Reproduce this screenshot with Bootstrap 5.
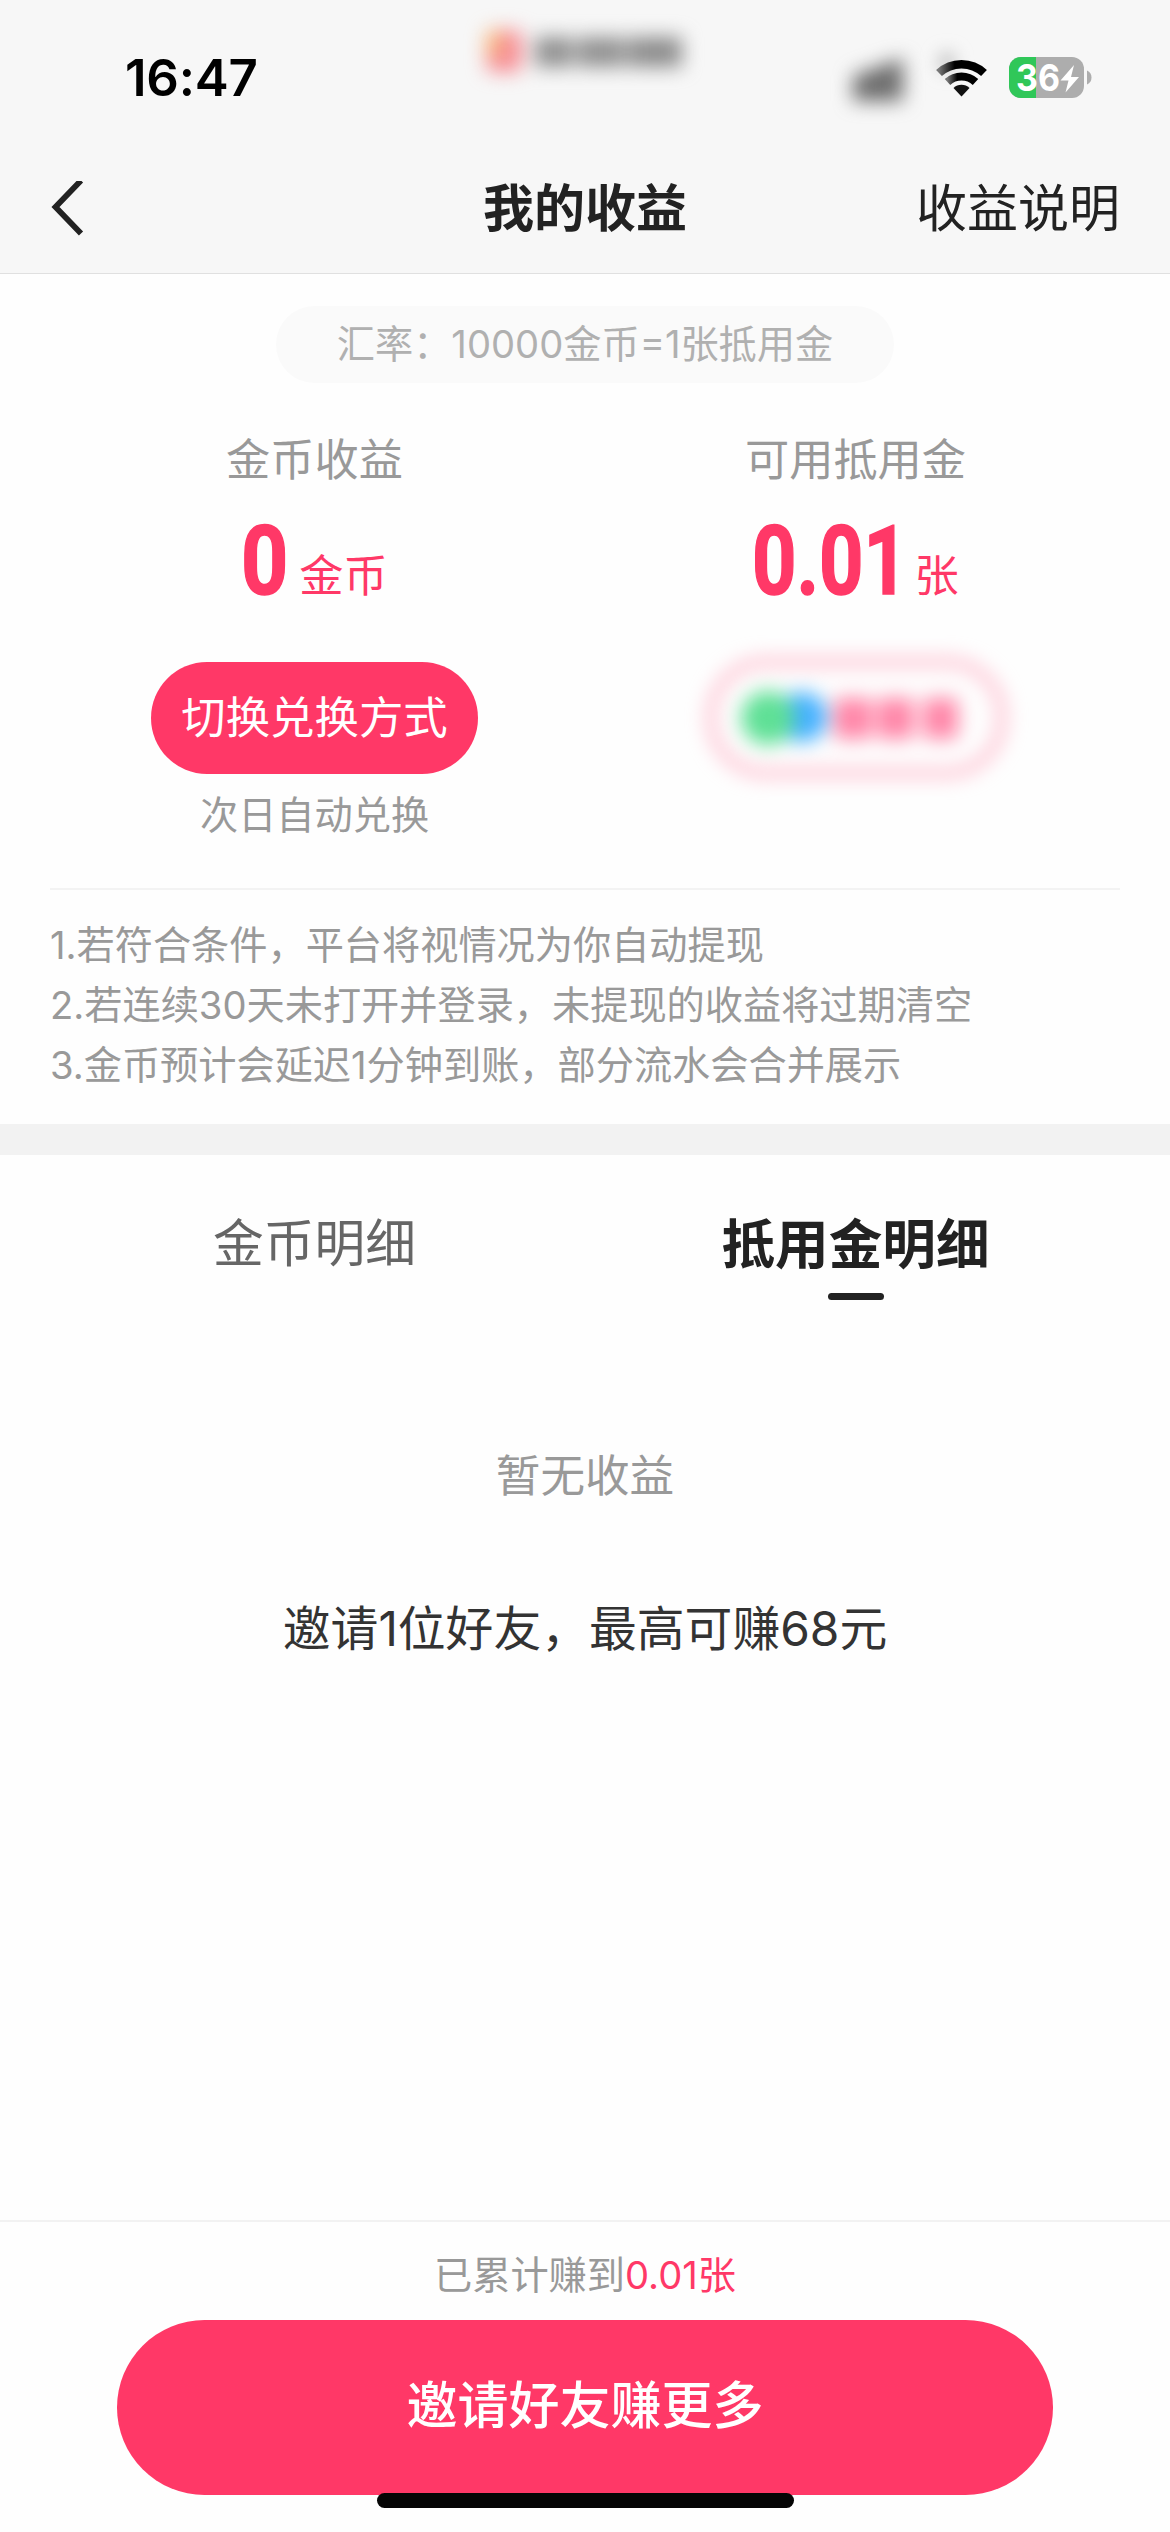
<!DOCTYPE html>
<html lang="zh-CN">
<head>
<meta charset="utf-8">
<meta name="viewport" content="width=device-width, initial-scale=1">
<title>我的收益</title>
<link href="https://cdn.jsdelivr.net/npm/bootstrap@5.3.0/dist/css/bootstrap.min.css" rel="stylesheet">
<style>
:root{--pink:#ff3867;--ink:#222;--mute:#999}
body{width:1170px;height:2532px;margin:0;overflow:hidden;background:#fefefe;color:var(--ink);font-family:Inter,"Noto Sans CJK SC",sans-serif;font-size:38.2px;line-height:60px;white-space:nowrap}
.top-area{height:274px;background:#f7f7f7;border-bottom:1.5px solid #e0e0e0}
.status-bar{height:156px;padding:0 79px 0 125px}
.clock{width:360px;font-size:51px;font-weight:600;letter-spacing:-.2px;line-height:156px;color:#000}
.app-hint{width:200px;height:64px;margin-top:18px}
.nav-row{height:102px;padding:3px 50px 0;font-size:51px}
.nav-row>*{flex:1 1 0}
.title-txt{font-weight:600}
.rate-pill{width:618px;height:77px;margin:32px auto 0;padding-bottom:2px;border-radius:39px;background:#fafafa;color:#b0b0b0}
.earn-row{height:505px;padding:0 44px}
.earn-col{padding-top:47px}
.earn-label{font-size:44.2px;color:var(--mute)}
.amount{height:120px;margin-top:8px;color:var(--pink);font-size:44.2px}
.amount-num{flex:none;width:162px;height:120px;text-align:left;font:700 97px/126px Roboto,sans-serif;-webkit-text-stroke:1.5px var(--pink);transform:scaleX(.8);transform-origin:0 0}
.amount-num.one-digit{width:58px;transform:scaleX(.85)}
.amount-unit{margin-top:48px}
.btn-swap{width:327px;height:112px;margin-top:44px;border-radius:56px;background:var(--pink);color:#fff;font-size:44.4px;line-height:112px;padding:0;border:0}
.btn-cash{width:330px;height:150px;margin-top:25px}
.swap-tip{margin-top:11px;color:var(--mute)}
.notes{margin:0 50px;padding-top:25px;border-top:2px solid #f3f3f3;height:236px;color:var(--mute)}
.band{height:31px;background:#f2f2f2}
.tab-row{height:176px;padding:0 44px}
.tab-row .nav-link{padding:0;height:145px;line-height:177px;font-size:50.7px;color:#666}
.tab-row .nav-link.active{font-size:53.6px;line-height:180px;font-weight:600;color:var(--ink);position:relative}
.tab-row .active::after{content:"";position:absolute;left:50%;bottom:0;width:56px;height:7px;margin-left:-28px;border-radius:4px;background:var(--ink)}
.empty-txt{margin-top:113px;font-size:44.6px;color:var(--mute);line-height:64px}
.invite-txt{margin-top:89px;font-size:47.8px;color:#333;line-height:64px}
.foot{height:312px;border-top:2px solid #f2f2f2;padding-top:23px;position:relative}
.foot-sum{color:var(--mute)}
.foot-sum span{color:var(--pink)}
.btn-invite{width:936px;height:175px;margin-top:15px;border-radius:88px;background:var(--pink);color:#fff;font-size:51px;font-weight:500;line-height:164px;padding:0 0 4px;border:0}
.home-bar{position:absolute;left:377px;bottom:24px;width:417px;height:15px;border-radius:8px;background:#050505}
</style>
</head>
<body class="d-flex flex-column">
<header class="top-area">
  <div class="status-bar d-flex">
    <div class="clock">16:47</div>
    <svg class="app-hint" viewBox="0 0 200 64" overflow="visible">
      <g filter="url(#softer)"><rect x="1" y="12" width="36" height="42" rx="8" fill="#f68d95"/><rect x="2" y="13" width="14" height="24" fill="#f8b876"/>
      <rect x="50" y="19" width="38" height="30" fill="#909090"/><rect x="92" y="19" width="48" height="30" fill="#919191"/><rect x="143" y="19" width="54" height="30" fill="#8c8c8c"/></g>
    </svg>
    <svg class="ms-auto" width="242" height="156" viewBox="849 0 242 156" overflow="visible">
      <defs><filter id="soft" x="-100%" y="-100%" width="300%" height="300%"><feGaussianBlur stdDeviation="8"/></filter>
      <filter id="softer" x="-80%" y="-80%" width="260%" height="260%" color-interpolation-filters="sRGB"><feGaussianBlur stdDeviation="9.500"/></filter>
      <linearGradient id="fade"><stop offset="0" stop-color="#777"/><stop offset=".35" stop-color="#000"/></linearGradient></defs>
      <path d="M853 76l50-18v43h-50z" fill="#6c6c6c" filter="url(#softer)"/>
      <ellipse cx="947" cy="62" rx="10" ry="11" fill="#ccc" filter="url(#soft)"/>
      <g fill="none" stroke-width="8.5">
        <path d="M939 73a33 33 0 0 1 45 0" stroke="url(#fade)"/>
        <path d="M947.500 82a20.500 20.500 0 0 1 28 0" stroke="url(#fade)" stroke-width="8"/>
      </g>
      <path d="M961.500 96.500l-8-8.500a11.500 11.500 0 0 1 16 0z" fill="#111"/>
      <clipPath id="batt"><rect x="1009" y="57" width="75" height="41" rx="12"/></clipPath>
      <g clip-path="url(#batt)"><rect x="1009" y="57" width="75" height="41" fill="#adadad"/><rect x="1009" y="57" width="27" height="41" fill="#30c759"/></g>
      <path d="M1087 70.500q4.500 2 4.500 7t-4.500 7z" fill="#adadad"/>
      <text x="1016" y="91" font-family="Inter" font-weight="700" font-size="37" fill="#fff" textLength="44" lengthAdjust="spacingAndGlyphs">36</text>
      <path d="M1074 65l-13.500 15.500h8L1065.500 92.500l13.500-15.500h-8z" fill="#fff"/>
    </svg>
  </div>
  <div class="nav-row d-flex align-items-center">
    <div class="d-flex"><svg width="36" height="56" viewBox="50 182.500 36 56"><path d="M81 182L55.500 208.500 81 235" fill="none" stroke="#222" stroke-width="5.800"/></svg></div>
    <div class="title-txt text-center">我的收益</div>
    <div class="text-end">收益说明</div>
  </div>
</header>
<main class="flex-grow-1">
  <div class="rate-pill d-flex align-items-center justify-content-center">汇率：10000金币=1张抵用金</div>
  <section class="earn-row row g-0 text-center">
    <div class="col-6 earn-col d-flex flex-column align-items-center">
      <div class="earn-label">金币收益</div>
      <div class="amount d-flex"><span class="amount-num one-digit">0</span><span class="amount-unit">金币</span></div>
      <button class="btn btn-swap">切换兑换方式</button>
      <div class="swap-tip">次日自动兑换</div>
    </div>
    <div class="col-6 earn-col d-flex flex-column align-items-center">
      <div class="earn-label">可用抵用金</div>
      <div class="amount d-flex"><span class="amount-num">0.01</span><span class="amount-unit">张</span></div>
      <svg class="btn-cash" viewBox="692 642 330 150" overflow="visible">
        <g filter="url(#softer)">
          <rect x="712" y="661" width="291" height="111" rx="55" fill="none" stroke="#ffb4c7" stroke-width="8"/>
          <circle cx="803" cy="716" r="25" fill="#45b0ff"/><circle cx="769" cy="717" r="27" fill="#5fe096"/>
          <g fill="#ff86a8"><rect x="835" y="697" width="38" height="41" rx="6"/><rect x="878" y="697" width="37" height="41" rx="6"/><rect x="924" y="697" width="35" height="41" rx="6"/></g>
        </g>
      </svg>
    </div>
  </section>
  <div class="notes">
    <div>1.若符合条件，平台将视情况为你自动提现</div>
    <div>2.若连续30天未打开并登录，未提现的收益将过期清空</div>
    <div>3.金币预计会延迟1分钟到账，部分流水会合并展示</div>
  </div>
  <div class="band"></div>
  <nav class="tab-row nav row g-0 text-center">
    <a class="nav-link col-6">金币明细</a>
    <a class="nav-link col-6 active">抵用金明细</a>
  </nav>
  <div class="empty-txt text-center">暂无收益</div>
  <div class="invite-txt text-center">邀请1位好友，最高可赚68元</div>
</main>
<footer class="foot d-flex flex-column align-items-center">
  <div class="foot-sum">已累计赚到<span>0.01张</span></div>
  <button class="btn btn-invite">邀请好友赚更多</button>
  <div class="home-bar"></div>
</footer>
<script src="https://cdn.jsdelivr.net/npm/bootstrap@5.3.0/dist/js/bootstrap.bundle.min.js"></script>
</body>
</html>
